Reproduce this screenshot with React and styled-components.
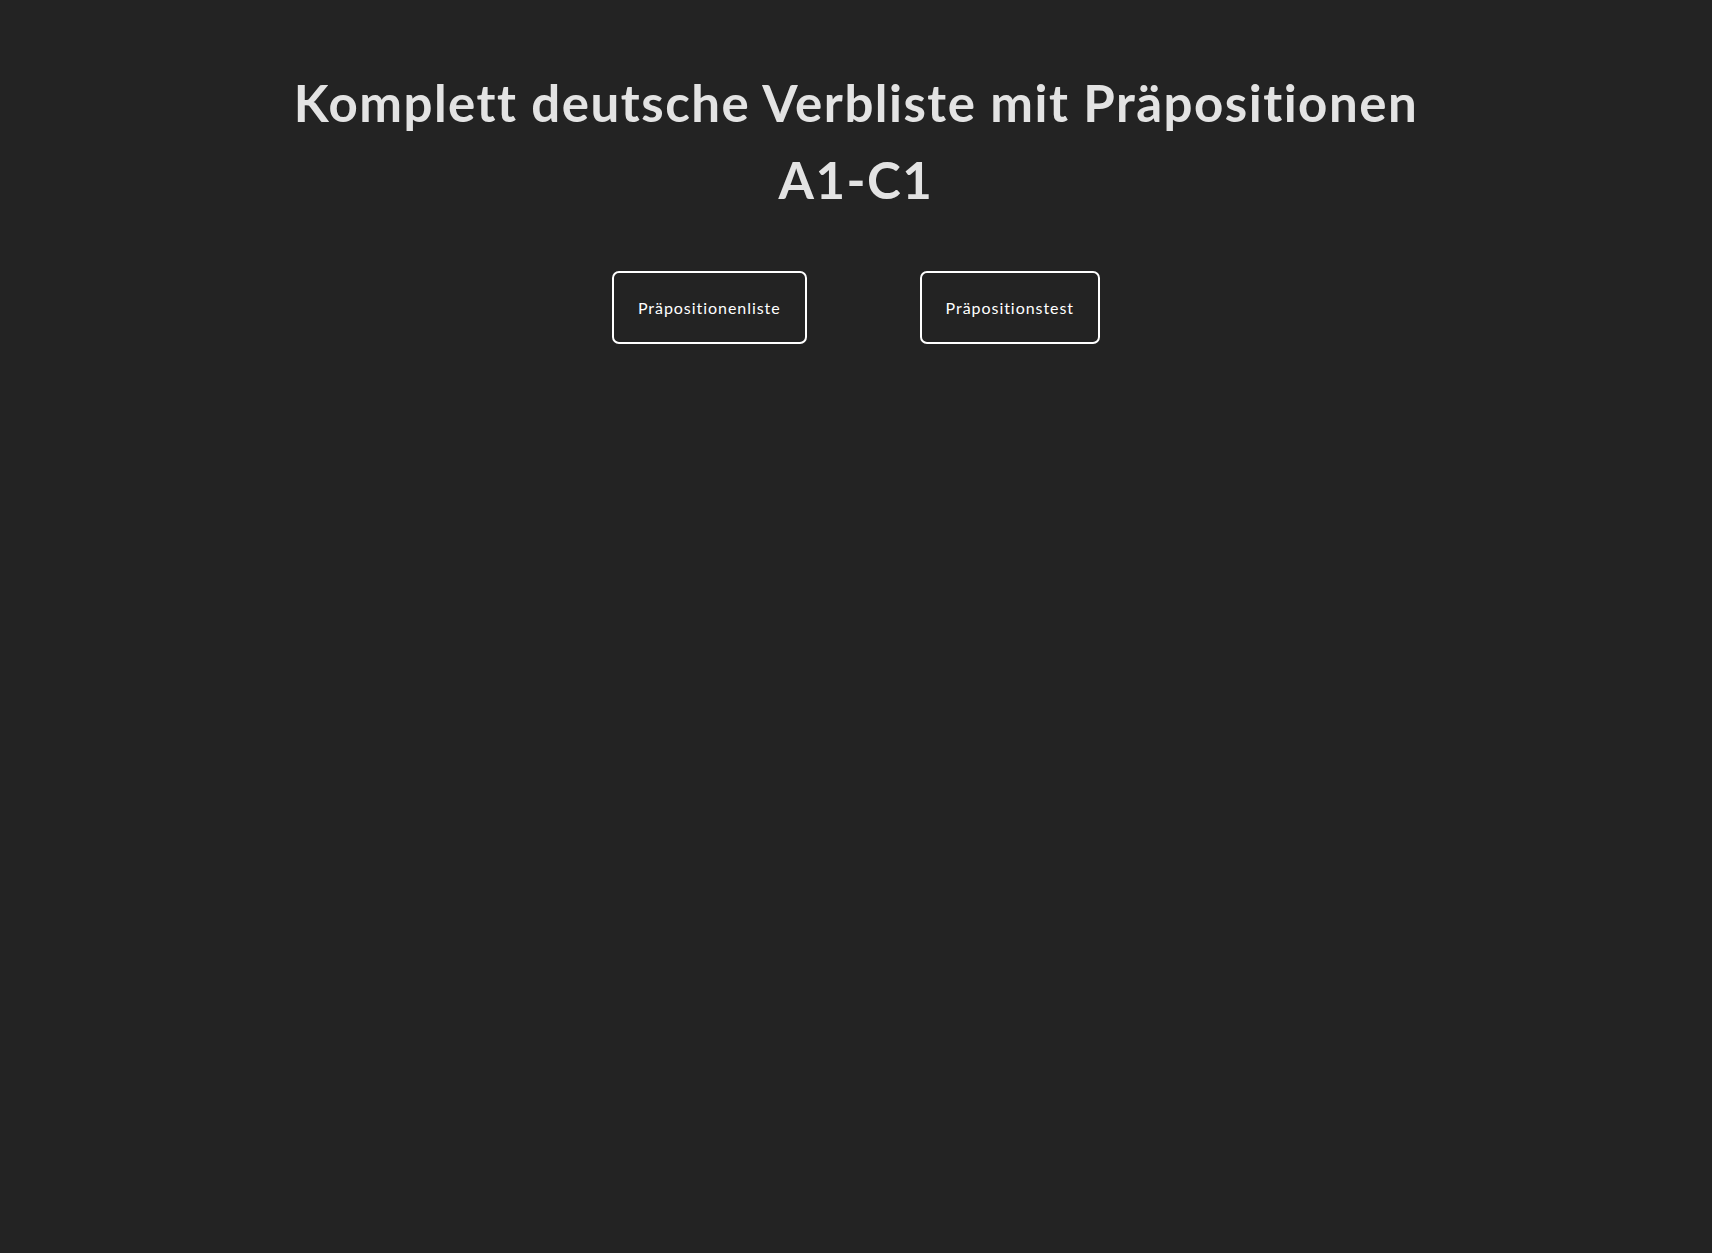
import React from 'react'
import styled, { createGlobalStyle } from 'styled-components'

const Global = createGlobalStyle`
  * { box-sizing: border-box; }
  html, body {
    margin: 0;
    padding: 0;
    background: #232323;
    min-height: 100%;
  }
  body {
    font-family: Lato, "Noto Sans", sans-serif;
    color: #e3e3e3;
  }
`

const Page = styled.div`
  min-height: 1253px;
  background: #232323;
  display: flex;
  flex-direction: column;
  align-items: center;
  padding-top: 64px;
`

const Title = styled.h1`
  margin: 0;
  width: 1160px;
  text-align: center;
  font-size: 51px;
  line-height: 77px;
  letter-spacing: 1.5px;
  font-weight: 700;
  color: #e3e3e3;
`

const Buttons = styled.div`
  display: flex;
  gap: 113px;
  margin-top: 53px;
`

const Button = styled.button`
  height: 73px;
  padding: 0 24px;
  background: transparent;
  border: 2px solid #fff;
  border-radius: 7px;
  color: #fff;
  font-family: Lato, "Noto Sans", sans-serif;
  font-size: 16px;
  letter-spacing: 0.95px;
  font-weight: 400;
  cursor: pointer;
`

const App = () => {
  return (
    <Page>
      <Global />
      <Title>Komplett deutsche Verbliste mit Präpositionen A1-C1</Title>
      <Buttons>
        <Button>Präpositionenliste</Button>
        <Button>Präpositionstest</Button>
      </Buttons>
    </Page>
  )
}

export default App
